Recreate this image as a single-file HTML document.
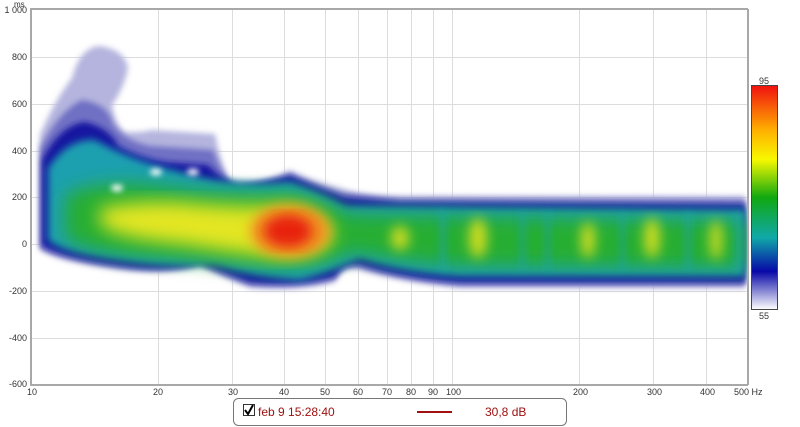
<!DOCTYPE html>
<html><head><style>
body{margin:0;width:800px;height:427px;background:#fff;font-family:"Liberation Sans",sans-serif;overflow:hidden;position:relative}
.t{position:absolute;font-size:9px;color:#333}
</style></head><body>
<svg width="800" height="427" style="position:absolute;left:0;top:0">
<defs>
<filter id="b3" x="-20%" y="-20%" width="140%" height="140%"><feGaussianBlur stdDeviation="3"/></filter>
<filter id="b4" x="-20%" y="-20%" width="140%" height="140%"><feGaussianBlur stdDeviation="4"/></filter>
<filter id="b6" x="-20%" y="-20%" width="140%" height="140%"><feGaussianBlur stdDeviation="6"/></filter>
<filter id="b9" x="-20%" y="-20%" width="140%" height="140%"><feGaussianBlur stdDeviation="9"/></filter>
<clipPath id="c"><rect x="31" y="10" width="716" height="374"/></clipPath>
<linearGradient id="cb" x1="0" y1="0" x2="0" y2="1">
<stop offset="0" stop-color="#f01010"/><stop offset="0.2" stop-color="#ffb000"/><stop offset="0.33" stop-color="#f8f800"/><stop offset="0.5" stop-color="#10a810"/><stop offset="0.68" stop-color="#10a8a8"/><stop offset="0.83" stop-color="#0808a8"/><stop offset="1" stop-color="#ffffff"/>
</linearGradient>
</defs>
<rect x="31" y="10" width="716" height="374" fill="#fff"/>
<g stroke="#dcdcdc" stroke-width="1">
<line x1="31" y1="57.5" x2="747" y2="57.5"/><line x1="31" y1="104.5" x2="747" y2="104.5"/><line x1="31" y1="151.5" x2="747" y2="151.5"/><line x1="31" y1="197.5" x2="747" y2="197.5"/><line x1="31" y1="244.5" x2="747" y2="244.5"/><line x1="31" y1="291.5" x2="747" y2="291.5"/><line x1="31" y1="338.5" x2="747" y2="338.5"/>
<line x1="158.5" y1="10" x2="158.5" y2="384"/><line x1="232.5" y1="10" x2="232.5" y2="384"/><line x1="284.5" y1="10" x2="284.5" y2="384"/><line x1="325.5" y1="10" x2="325.5" y2="384"/><line x1="358.5" y1="10" x2="358.5" y2="384"/><line x1="387.5" y1="10" x2="387.5" y2="384"/><line x1="411.5" y1="10" x2="411.5" y2="384"/><line x1="433.5" y1="10" x2="433.5" y2="384"/><line x1="452.5" y1="10" x2="452.5" y2="384"/><line x1="579.5" y1="10" x2="579.5" y2="384"/><line x1="653.5" y1="10" x2="653.5" y2="384"/><line x1="706.5" y1="10" x2="706.5" y2="384"/>
</g>
<g clip-path="url(#c)">
<!-- lavender outer -->
<path filter="url(#b3)" fill="#b4b4de" d="M40,135 Q55,100 72,78 Q80,47 100,46 Q125,50 128,68 Q124,88 112,105 Q115,125 125,132 Q140,133 152,130 L215,134 Q220,160 228,178 Q260,185 290,170 Q310,180 340,188 Q360,196 400,196 L745,196 L745,288 L460,288 Q400,282 360,270 Q342,266 335,282 Q300,292 250,288 Q215,274 200,267 Q170,276 120,270 Q60,262 40,250 Z"/>
<path filter="url(#b3)" fill="#7070c4" d="M40,148 Q60,110 82,100 Q108,104 112,122 Q122,140 150,146 L213,150 Q222,175 232,183 Q265,184 290,174 Q312,184 342,193 L400,199 L745,200 L745,285 L460,285 Q400,280 360,267 Q342,264 335,279 Q300,289 250,285 Q215,272 200,264 Q170,274 120,268 Q60,260 40,248 Z"/>
<!-- dark blue -->
<path filter="url(#b3)" fill="#1414a0" d="M42,160 Q60,125 85,122 Q110,128 118,146 Q140,158 165,162 L208,165 Q222,180 240,187 Q270,182 290,176 Q312,186 345,198 L400,203 L745,205 L745,282 L460,282 Q400,277 360,264 Q342,262 335,276 Q300,286 250,282 Q215,269 200,262 Q170,272 120,265 Q60,257 42,245 Z"/>
<!-- teal -->
<path filter="url(#b4)" fill="#1aa0b0" d="M48,168 Q68,138 95,140 Q130,160 180,172 Q230,188 290,182 Q320,192 345,206 L745,210 L745,276 L460,276 Q400,272 360,258 Q335,270 300,280 Q250,276 215,264 Q170,268 120,260 Q60,252 48,240 Z"/>
<!-- green -->
<path filter="url(#b9)" fill="#28ae30" d="M65,195 Q100,178 160,186 Q230,196 290,192 Q330,200 348,214 L745,220 L745,268 L460,266 Q400,262 352,252 Q320,270 270,268 Q220,262 160,258 Q90,254 65,238 Z"/>
<!-- yellow -->
<path filter="url(#b9)" fill="#e4e622" d="M100,208 Q150,198 200,204 Q250,208 290,205 Q328,212 334,236 Q322,258 280,258 Q230,252 180,244 Q115,238 100,224 Z"/>
<g filter="url(#b6)" fill="#cedc22">
<ellipse cx="478" cy="238" rx="9" ry="20"/><ellipse cx="588" cy="240" rx="7" ry="18"/><ellipse cx="652" cy="238" rx="8" ry="20"/><ellipse cx="716" cy="240" rx="6" ry="20"/><ellipse cx="400" cy="238" rx="9" ry="12"/>
</g>
<g filter="url(#b4)" fill="#1aa0b0" opacity="0.6">
<rect x="440" y="210" width="6" height="60"/><rect x="520" y="212" width="5" height="58"/><rect x="545" y="212" width="5" height="58"/><rect x="620" y="212" width="5" height="58"/><rect x="685" y="212" width="6" height="58"/><rect x="735" y="212" width="6" height="58"/>
</g>
<!-- orange/red -->
<ellipse filter="url(#b6)" cx="290" cy="231" rx="40" ry="26" fill="#f09020"/>
<ellipse filter="url(#b6)" cx="288" cy="231" rx="24" ry="16" fill="#e82010"/>
<!-- holes -->
<g fill="#fff" filter="url(#b3)" opacity="0.95">
<ellipse cx="117" cy="188" rx="6" ry="3.5"/><ellipse cx="156" cy="172" rx="6" ry="3.5"/><ellipse cx="193" cy="172" rx="6" ry="3.5"/>
</g>
</g>
<g fill="none" stroke="#a8a8a8" stroke-width="2"><line x1="31" y1="9" x2="31" y2="385"/><line x1="30" y1="385" x2="748" y2="385"/><line x1="748" y1="9" x2="748" y2="385"/><line x1="30" y1="9" x2="748" y2="9"/></g>
<rect x="751.5" y="85.5" width="26" height="224" fill="url(#cb)" stroke="#444"/>
<rect x="233.5" y="398.5" width="333" height="27" rx="5" fill="#fff" stroke="#777"/>
<rect x="243.5" y="404.5" width="11" height="11" fill="#fff" stroke="#333"/>
<path d="M245,410 L248,414 L253,405" fill="none" stroke="#000" stroke-width="2"/>
<line x1="417" y1="412" x2="452" y2="412" stroke="#a01010" stroke-width="2"/>
</svg>
<div class="t" style="left:14px;top:0;font-size:8px">ms</div>
<div class="t" style="right:773px;top:5px">1 000</div>
<div class="t" style="right:773px;top:52px">800</div>
<div class="t" style="right:773px;top:99px">600</div>
<div class="t" style="right:773px;top:146px">400</div>
<div class="t" style="right:773px;top:192px">200</div>
<div class="t" style="right:773px;top:239px">0</div>
<div class="t" style="right:773px;top:286px">-200</div>
<div class="t" style="right:773px;top:333px">-400</div>
<div class="t" style="right:773px;top:379px">-600</div>
<div class="t" style="left:27px;top:387px">10</div>
<div class="t" style="left:153px;top:387px">20</div>
<div class="t" style="left:228px;top:387px">30</div>
<div class="t" style="left:279px;top:387px">40</div>
<div class="t" style="left:320px;top:387px">50</div>
<div class="t" style="left:353px;top:387px">60</div>
<div class="t" style="left:382px;top:387px">70</div>
<div class="t" style="left:406px;top:387px">80</div>
<div class="t" style="left:428px;top:387px">90</div>
<div class="t" style="left:446px;top:387px">100</div>
<div class="t" style="left:573px;top:387px">200</div>
<div class="t" style="left:647px;top:387px">300</div>
<div class="t" style="left:700px;top:387px">400</div>
<div class="t" style="left:734px;top:387px">500 Hz</div>
<div class="t" style="left:759px;top:76px">95</div>
<div class="t" style="left:759px;top:311px">55</div>
<div style="position:absolute;left:258px;top:405px;font-size:12px;color:#a01010">feb 9 15:28:40</div>
<div style="position:absolute;left:485px;top:405px;font-size:12px;color:#a01010">30,8 dB</div>
</body></html>
